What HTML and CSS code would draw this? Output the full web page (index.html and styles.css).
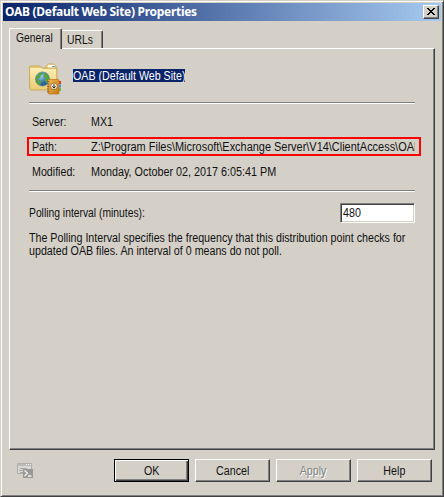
FILE: index.html
```
<!DOCTYPE html>
<html lang="en">
<head>
<meta charset="utf-8">
<title>OAB (Default Web Site) Properties</title>
<link rel="stylesheet" href="styles.css">
</head>
<body>
<main class="dialog">
  <header class="titlebar">
    <h1 class="title">OAB (Default Web Site) Properties</h1>
    <button class="close" aria-label="Close"><svg width="8" height="7" viewBox="0 0 8 7" shape-rendering="crispEdges"><path d="M0 0h2v1h1v1h2V1h1V0h2v1H7v1H6v1H5v1h1v1h1v1h1v1H6V6H5V5H3v1H2v1H0V6h1V5h1V4h1V3H2V2H1V1H0z"/></svg></button>
  </header>
  <nav class="tabs">
    <div class="tab tab-active"><span class="text tight">General</span></div>
    <div class="tab"><span class="text tight">URLs</span></div>
  </nav>
  <section class="page">
    <div class="heading">
      <svg class="folder" width="34" height="32" viewBox="0 0 34 32">
        <defs>
          <linearGradient id="fold" x2="0" y2="1"><stop stop-color="#fbeeb5"/><stop offset="1" stop-color="#edcd75"/></linearGradient>
          <radialGradient id="sea" cx=".4" cy=".3"><stop stop-color="#9ed6f2"/><stop offset="1" stop-color="#28649d"/></radialGradient>
          <linearGradient id="book" x2="1" y2="1"><stop stop-color="#efb950"/><stop offset="1" stop-color="#c9780f"/></linearGradient>
        </defs>
        <path d="M17 5V2l2-2h6l2 2v3z" fill="#eed78c" stroke="#c4a252" stroke-width=".7"/>
        <path d="M19 1h7v3h-7z" fill="#fffdf2"/><path d="M23 2h3v1h-3z" fill="#5d9bd0"/>
        <path d="M1 2h10l2 2h15v22H2L.5 24V3z" fill="#e6c873" stroke="#c7a44f" stroke-width=".8"/>
        <path d="M1 4h11l2 1h13v20H2z" fill="url(#fold)"/>
        <circle cx="13.500" cy="15" r="7.200" fill="url(#sea)" stroke="#7898a0" stroke-width=".5"/>
        <path d="M7.500 12l3-3 4-.5-1 2-2 1v2l-3 1 1 2 3 1-1 3-2 1-2-4-1-3zM15.500 9l3 1 2 4-1 4-2 1-2-3 1-2-2-1z" fill="#57a541"/>
        <path d="M30 17h2v3h-2z" fill="#dc3922"/><path d="M30 20.500h2v3h-2z" fill="#3d9bdd"/><path d="M30 24h2v3h-2z" fill="#6fb84b"/>
        <rect x="19" y="15.500" width="11" height="14.500" rx="1" fill="url(#book)" stroke="#b87420" stroke-width=".7"/>
        <path d="M18 17.500h2.500M18 20h2.500M18 22.500h2.500M18 25h2.500M18 27.500h2.500" stroke="#7c6034" stroke-width=".8"/>
        <circle cx="25" cy="22.300" r="3.300" fill="#fff8df" stroke="#7d521b" stroke-width=".7"/>
        <path d="M25 20v4.200M23.300 22.300l1.700 1.800 1.700-1.800" fill="none" stroke="#30220f"/>
      </svg>
      <span class="name"><span class="text">OAB (Default Web Site)</span></span>
    </div>
    <hr>
    <dl class="facts">
      <div class="fact first"><dt><span class="text">Server:</span></dt><dd><span class="text">MX1</span></dd></div>
      <div class="fact marked"><dt><span class="text">Path:</span></dt><dd><span class="text path">Z:\Program Files\Microsoft\Exchange Server\V14\ClientAccess\OAB</span></dd></div>
      <div class="fact"><dt><span class="text">Modified:</span></dt><dd><span class="text date">Monday, October 02, 2017 6:05:41 PM</span></dd></div>
    </dl>
    <hr>
    <div class="polling">
      <span class="text tight">Polling interval (minutes):</span>
      <span class="field"><span class="text">480</span></span>
    </div>
    <p class="help"><span class="text">The Polling Interval specifies the frequency that this distribution point checks for</span><br><span class="text">updated OAB files. An interval of 0 means do not poll.</span></p>
  </section>
  <footer class="footer">
    <svg class="shell" width="16" height="16" viewBox="0 0 16 16">
      <path d="M.5.500h14v10H.5z" fill="#d9d8d4" stroke="#b0afac"/>
      <path d="M1 1h13v2H1z" fill="#bcbbb8"/><path d="M9 1.500h1M11 1.500h1M13 1.500h1" stroke="#eee"/>
      <path d="M3 5.500h7M2 7.500h5M3 9.500h3" stroke="#a9a8a5"/>
      <path d="M6 6h10v9H6z" fill="#999997"/>
      <path d="M7.500 7.500l3 2.700-3 2.700M11 13h3.500" fill="none" stroke="#f2f2ef" stroke-width="1.300"/>
    </svg>
    <button class="btn btn-default"><span class="text">OK</span></button>
    <button class="btn"><span class="text">Cancel</span></button>
    <button class="btn btn-disabled" disabled><span class="text">Apply</span></button>
    <button class="btn"><span class="text">Help</span></button>
  </footer>
</main>
</body>
</html>
```
FILE: styles.css
```
* { box-sizing: border-box; }
body { margin: 0; background: #d4d0c8; }
.dialog {
  width: 444px; height: 497px; padding: 1px;
  display: flex; flex-direction: column;
  background: #d4d0c8; color: #111;
  border: 1px solid; border-color: #d4d0c8 #404040 #404040 #d4d0c8;
  box-shadow: inset 1px 1px #fff, inset -1px -1px #808080;
  font: 12px/13px "Liberation Sans", Arial, sans-serif;
  white-space: nowrap;
}
.text { display: inline-block; transform: scaleX(.89); transform-origin: 0 50%; }
.tight { transform: scaleX(.86); }
.titlebar {
  height: 18px; margin: 1px 1px 0; padding: 0 2px 0 2px;
  display: flex; align-items: center; justify-content: space-between;
  background: linear-gradient(90deg, #0a246a, #a6caf0);
}
.title { margin: 0; color: #fff; font: bold 12px/18px "Noto Sans", Tahoma, sans-serif; letter-spacing: -.29px; }
button { padding: 0; color: #111; font: inherit; background: #d4d0c8; border: 1px solid; border-color: #fff #404040 #404040 #fff; box-shadow: inset -1px -1px #808080; }
.close { width: 16px; height: 14px; display: flex; justify-content: center; align-items: center; padding: 0 1px 1px 0; }
.tabs { display: flex; align-items: flex-end; height: 27px; padding-left: 7px; }
.tab {
  height: 18px; width: 41px; padding: 3px 0 0 4px;
  border: 1px solid; border-color: #fff #404040 transparent transparent; border-bottom: 0;
  border-radius: 2px 2px 0 0; box-shadow: inset -1px 0 #808080;
}
.tab-active { width: 53px; height: 21px; margin-bottom: -1px; padding: 3px 0 0 6px; border-left-color: #fff; background: #d4d0c8; position: relative; }
.page {
  width: 426px; height: 402px; margin-left: 7px; padding: 14px 19px 0 19px;
  border: 1px solid; border-color: #fff #404040 #404040 #fff; box-shadow: inset -1px -1px #808080;
}
.heading { height: 39px; display: flex; align-items: flex-start; }
.folder { flex: none; margin-top: 1px; overflow: visible; }
.name { margin: 6px 0 0 10px; width: 112px; height: 13px; line-height: 15px; background: #0a246a; color: #fff; }
hr { margin: 0; height: 2px; border: 0; border-top: 1px solid #808080; border-bottom: 1px solid #fff; }
.facts { margin: 7px -6px 7px -2px; }
.fact { height: 21px; padding: 0 4px 0 3px; display: grid; grid-template-columns: 59px 1fr; align-items: center; border: 2px solid transparent; }
.fact.first { padding-top: 2px; }
.fact.marked { height: 19px; margin: 5px 0 6px; padding-top: 1px; border-color: #f00; }
dt, dd { margin: 0; overflow: hidden; height: 13px; }
.path { transform: scaleX(.912); }
.date { transform: scaleX(.9); }
.polling { display: flex; justify-content: space-between; align-items: center; height: 20px; margin-top: 11px; }
.field {
  width: 75px; height: 20px; padding: 3px 0 0 2px; background: #fff;
  border: 1px solid; border-color: #808080 #fff #fff #808080;
  box-shadow: inset 1px 1px #404040, inset -1px -1px #d4d0c8;
}
.help { margin: 9px 0 0; }
.footer { display: flex; gap: 6px; padding: 9px 10px 0 15px; }
.shell { margin: 4px auto 0 0; }
.btn { width: 75px; height: 23px; padding-top: 2px; }
.btn .text { transform-origin: 50% 50%; }
.btn-default { border-color: #000; box-shadow: inset 1px 1px #fff, inset -1px -1px #404040, inset -2px -2px #808080; }
.btn-disabled { color: #808080; text-shadow: 1px 1px #fff; }
```
